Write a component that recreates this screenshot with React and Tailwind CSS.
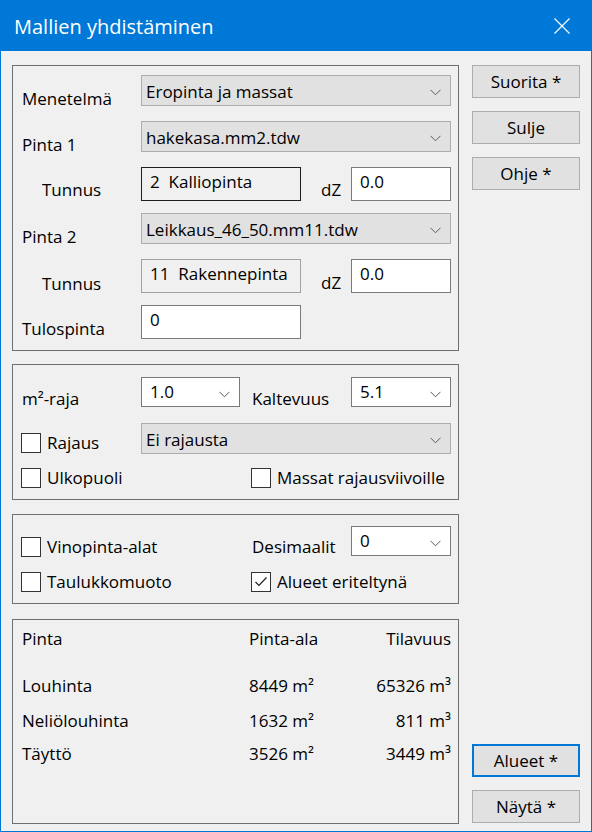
import React from 'react';

const font = { fontFamily: '"Open Sans", "Noto Sans", sans-serif' };

function Chevron() {
  return (
    <svg width="11" height="7" viewBox="0 0 11 7" className="shrink-0">
      <path d="M0.5 0.8 L5.5 5.8 L10.5 0.8" fill="none" stroke="#5a5a5a" strokeWidth="1" />
    </svg>
  );
}

function Combo({ value, white, className }) {
  // harmaa = lukittu valinta, valkoinen = muokattava
  const look = white
    ? 'bg-white border-[#7a7a7a] pl-[8px] pt-[4px]'
    : 'bg-[#e1e1e1] border-[#adadad] pl-[4px] pt-[6px]';
  return (
    <div className={`flex items-start justify-between border pr-[9px] ${look} ${className}`}>
      <span className="leading-[20px] whitespace-nowrap">{value}</span>
      <div className={white ? 'mt-[9px]' : 'mt-[7px]'}>
        <Chevron />
      </div>
    </div>
  );
}

function Box({ value, white, dark, className }) {
  const look = white
    ? 'bg-white border-[#7a7a7a]'
    : dark
    ? 'bg-[#f0f0f0] border-[#1e1e1e]'
    : 'bg-[#f0f0f0] border-[#a0a0a0]';
  return (
    <div className={`h-[34px] border pl-[8px] pt-[4px] leading-[20px] whitespace-pre ${look} ${className}`}>
      {value}
    </div>
  );
}

function Check({ checked, label, className }) {
  return (
    <div className={`flex items-start gap-[6px] ${className}`}>
      <div className="w-[20px] h-[20px] border border-[#333333] bg-white flex items-center justify-center shrink-0">
        {checked && (
          <svg width="14" height="12" viewBox="0 0 14 12">
            <path d="M1.5 6 L5 9.5 L12.5 1.5" fill="none" stroke="#222222" strokeWidth="1.2" />
          </svg>
        )}
      </div>
      <span className="leading-[20px] whitespace-nowrap">{label}</span>
    </div>
  );
}

function Button({ children, active }) {
  return (
    <button
      className={`w-[108px] h-[33px] bg-[#e1e1e1] flex items-center justify-center leading-[20px] ${
        active ? 'border-2 border-[#0078d7]' : 'border border-[#adadad]'
      }`}
    >
      {children}
    </button>
  );
}

export default function App() {
  return (
    <div
      style={font}
      className="w-[592px] h-[832px] flex flex-col bg-[#f0f0f0] text-black text-[17px] border-x border-b border-[#0078d7] overflow-hidden"
    >
      {/* otsikkopalkki */}
      <div className="h-[51px] -mx-px bg-[#0078d7] flex items-center justify-between pl-[14px] pr-[22px] shrink-0">
        <span className="text-white text-[20px] leading-[26px] mt-[2px]">Mallien yhdistäminen</span>
        <svg width="16" height="16" viewBox="0 0 16 16">
          <path d="M0.5 0.5 L15.5 15.5 M15.5 0.5 L0.5 15.5" stroke="white" strokeWidth="1.2" />
        </svg>
      </div>

      <div className="flex-1 flex pl-[11px] pr-[11px] pt-[14px] pb-[7px] gap-[13px]">
        <div className="w-[447px] flex flex-col">
          {/* ryhmä 1 */}
          <div className="h-[286px] border border-[#707070] pl-[9px] pr-[7px] pt-[9px] flex flex-col">
            <div className="flex items-start h-[31px]">
              <span className="w-[119px] mt-[14px] leading-[20px]">Menetelmä</span>
              <Combo value="Eropinta ja massat" className="w-[310px] h-[31px]" />
            </div>
            <div className="flex items-start h-[31px] mt-[15px]">
              <span className="w-[119px] mt-[14px] leading-[20px]">Pinta 1</span>
              <Combo value="hakekasa.mm2.tdw" className="w-[310px] h-[31px]" />
            </div>
            <div className="flex items-start h-[34px] mt-[15px]">
              <span className="w-[119px] pl-[20px] mt-[13px] leading-[20px]">Tunnus</span>
              <Box value="2  Kalliopinta" dark className="w-[160px]" />
              <span className="w-[30px] ml-[20px] mt-[13px] leading-[20px]">dZ</span>
              <Box value="0.0" white className="w-[100px]" />
            </div>
            <div className="flex items-start h-[31px] mt-[12px]">
              <span className="w-[119px] mt-[14px] leading-[20px]">Pinta 2</span>
              <Combo value="Leikkaus_46_50.mm11.tdw" className="w-[310px] h-[31px]" />
            </div>
            <div className="flex items-start h-[34px] mt-[15px]">
              <span className="w-[119px] pl-[20px] mt-[15px] leading-[20px]">Tunnus</span>
              <Box value="11  Rakennepinta" className="w-[160px]" />
              <span className="w-[30px] ml-[20px] mt-[14px] leading-[20px]">dZ</span>
              <Box value="0.0" white className="w-[100px]" />
            </div>
            <div className="flex items-start h-[34px] mt-[12px]">
              <span className="w-[119px] mt-[14px] leading-[20px]">Tulospinta</span>
              <Box value="0" white className="w-[160px]" />
            </div>
          </div>

          {/* ryhmä 2 */}
          <div className="h-[136px] mt-[13px] border border-[#707070] pl-[8px] pr-[7px] pt-[12px] flex flex-col">
            <div className="flex items-start h-[30px]">
              <span className="w-[120px] pl-px mt-[12px] leading-[20px]">m²-raja</span>
              <Combo value="1.0" white className="w-[99px] h-[30px]" />
              <span className="w-[111px] pl-[12px] mt-[12px] leading-[20px]">Kaltevuus</span>
              <Combo value="5.1" white className="w-[100px] h-[30px]" />
            </div>
            <div className="flex items-start h-[31px] mt-[16px]">
              <div className="w-[120px]">
                <Check label="Rajaus" className="mt-[10px]" />
              </div>
              <Combo value="Ei rajausta" className="w-[310px] h-[31px]" />
            </div>
            <div className="flex items-start h-[20px] mt-[14px]">
              <Check label="Ulkopuoli" className="w-[230px]" />
              <Check label="Massat rajausviivoille" />
            </div>
          </div>

          {/* ryhmä 3 */}
          <div className="h-[90px] mt-[14px] border border-[#707070] pl-[8px] pr-[7px] pt-[11px] flex flex-col">
            <div className="flex items-start h-[30px]">
              <Check label="Vinopinta-alat" className="w-[231px] mt-[11px]" />
              <span className="w-[99px] mt-[11px] leading-[20px]">Desimaalit</span>
              <Combo value="0" white className="w-[100px] h-[30px]" />
            </div>
            <div className="flex items-start h-[20px] mt-[16px]">
              <Check label="Taulukkomuoto" className="w-[230px]" />
              <Check label="Alueet eriteltynä" checked />
            </div>
          </div>

          {/* ryhmä 4 */}
          <div className="flex-1 mt-[15px] border border-[#707070] pl-[9px] pr-[7px] pt-[9px]">
            <div className="grid grid-cols-[227px_100px_1fr] leading-[20px]">
              <span>Pinta</span>
              <span>Pinta-ala</span>
              <span className="text-right">Tilavuus</span>
            </div>
            <div className="grid grid-cols-[227px_100px_1fr] leading-[20px] mt-[27px]">
              <span>Louhinta</span>
              <span>8449 m²</span>
              <span className="text-right">65326 m³</span>
            </div>
            <div className="grid grid-cols-[227px_100px_1fr] leading-[20px] mt-[15px]">
              <span>Neliölouhinta</span>
              <span>1632 m²</span>
              <span className="text-right">811 m³</span>
            </div>
            <div className="grid grid-cols-[227px_100px_1fr] leading-[20px] mt-[13px]">
              <span>Täyttö</span>
              <span>3526 m²</span>
              <span className="text-right">3449 m³</span>
            </div>
          </div>
        </div>

        {/* painikkeet */}
        <div className="w-[108px] flex flex-col justify-between pb-px">
          <div className="flex flex-col gap-[13px]">
            <Button>Suorita *</Button>
            <Button>Sulje</Button>
            <Button>Ohje *</Button>
          </div>
          <div className="flex flex-col gap-[13px]">
            <Button active>Alueet *</Button>
            <Button>Näytä *</Button>
          </div>
        </div>
      </div>
    </div>
  );
}
